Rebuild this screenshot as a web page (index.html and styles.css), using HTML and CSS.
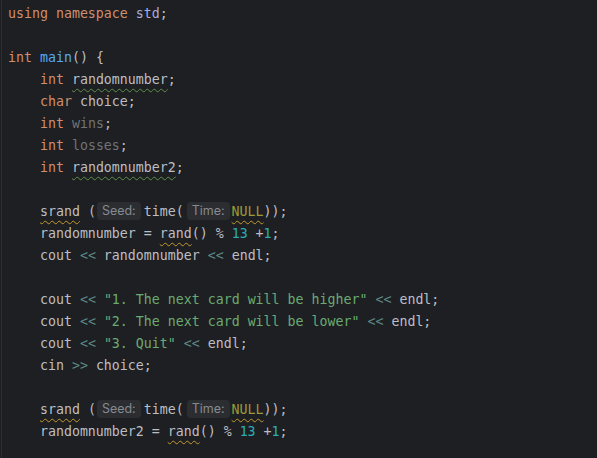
FILE: index.html
```html
<!DOCTYPE html>
<html>
<head>
<meta charset="utf-8">
<link rel="stylesheet" href="styles.css">
</head>
<body>
<div class="editor">
<div class="code">
<div class="ln"><span class="kw">using namespace</span> <span class="ns">std</span>;</div>
<div class="ln"></div>
<div class="ln"><span class="kw">int</span> <span class="fn">main</span>() {</div>
<div class="ln">    <span class="kw">int</span> <span class="typo">randomnumber</span>;</div>
<div class="ln">    <span class="kw">char</span> choice;</div>
<div class="ln">    <span class="kw">int</span> <span class="unused">wins</span>;</div>
<div class="ln">    <span class="kw">int</span> <span class="unused">losses</span>;</div>
<div class="ln">    <span class="kw">int</span> <span class="typo">randomnumber2</span>;</div>
<div class="ln"></div>
<div class="ln">    <span class="warn">srand</span> (<span class="hint hint-seed">Seed:</span>time(<span class="hint hint-time">Time:</span><span class="macro warn">NULL</span>));</div>
<div class="ln">    randomnumber = <span class="warn">rand</span>() % <span class="num">13</span> +<span class="num">1</span>;</div>
<div class="ln">    cout <span class="op">&lt;&lt;</span> randomnumber <span class="op">&lt;&lt;</span> endl;</div>
<div class="ln"></div>
<div class="ln">    cout <span class="op">&lt;&lt;</span> <span class="str">"1. The next card will be higher"</span> <span class="op">&lt;&lt;</span> endl;</div>
<div class="ln">    cout <span class="op">&lt;&lt;</span> <span class="str">"2. The next card will be lower"</span> <span class="op">&lt;&lt;</span> endl;</div>
<div class="ln">    cout <span class="op">&lt;&lt;</span> <span class="str">"3. Quit"</span> <span class="op">&lt;&lt;</span> endl;</div>
<div class="ln">    cin <span class="op">&gt;&gt;</span> choice;</div>
<div class="ln"></div>
<div class="ln">    <span class="warn">srand</span> (<span class="hint hint-seed">Seed:</span>time(<span class="hint hint-time">Time:</span><span class="macro warn">NULL</span>));</div>
<div class="ln">    randomnumber2 = <span class="warn">rand</span>() % <span class="num">13</span> +<span class="num">1</span>;</div>
<div class="ln"></div>
</div>
</div>
</body>
</html>
```
FILE: styles.css
```css
html, body {
  margin: 0;
  padding: 0;
  background: #1e1f22;
  height: 100%;
  overflow: hidden;
}
.editor {
  height: 100%;
  margin-left: 1px;
  border-left: 1px solid #2b2d30;
  padding: 3px 0 0 6px;
  box-sizing: border-box;
}
.code {
  font-family: "DejaVu Sans Mono", "Liberation Mono", monospace;
  font-size: 13.28px;
  color: #bcbec4;
}
.ln {
  height: 22px;
  line-height: 22px;
  white-space: pre;
}
.kw { color: #cf8e6d; }
.fn { color: #56a8f5; }
.ns { color: #a8acdf; }
.unused { color: #6f737a; }
.num { color: #2aacb8; }
.str { color: #6aab73; }
.op { color: #5f8c8a; }
.macro { color: #9c9a36; }
.typo {
  text-decoration: underline wavy #5f8f4e;
  text-decoration-thickness: 1px;
  text-underline-offset: 4px;
}
.warn {
  text-decoration: underline wavy #c29a2e;
  text-decoration-thickness: 1px;
  text-underline-offset: 4px;
}
.hint {
  display: inline-block;
  font-family: Inter, "Noto Sans", sans-serif;
  font-size: 12.5px;
  color: #868a91;
  background: #2b2d30;
  border-radius: 4px;
  height: 18px;
  line-height: 18px;
  padding: 0 5px;
  vertical-align: 1px;
}
.hint-seed { margin: 0 3px 0 1px; }
.hint-time { margin: 0 2px 0 3px; }
```
